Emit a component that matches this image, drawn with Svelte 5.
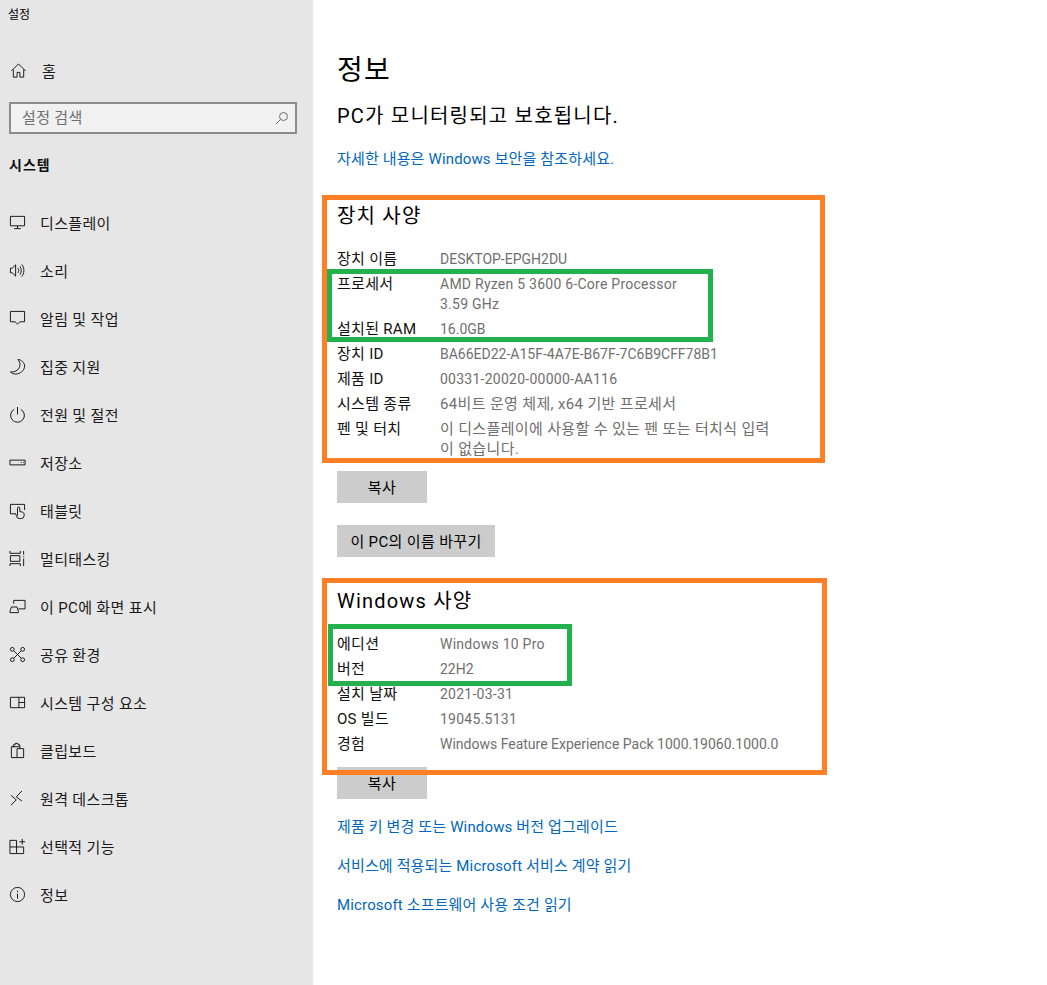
<script>
  const d = {
    display: 'M1.500 2.500h15v10h-15zM9 12.500v3M5.500 15.500h7',
    sound: 'M1.500 6.500h2l3.500-3.500v12l-3.500-3.500h-2zM9.500 6.500c1 1.500 1 3.500 0 5M11.500 4.500c2 2.500 2 6.500 0 9M13.500 2.500c3 3.500 3 9.500 0 13',
    notify: 'M1.500 1.500h15v11h-5l-2.500 2.500-2.500-2.500h-5z',
    moon: 'M9.500 1.500c2 2.500 2.800 5.500 1.500 8.500-1.500 3.200-5 5.200-9.500 4.800 1.500 1.500 3.500 2.200 5.500 2.200 4.500 0 9.500-3.500 9.500-8.500 0-3.500-3-6.500-7-7z',
    power: 'M9 1v8M5.500 3.500a7.300 7.300 0 1 0 7 0',
    storage: 'M1 6.500h16v5H1zM12.500 9h1M15 9h1',
    tablet: 'M7 12.500H1.500v-10h15v6M9 14.500V6.500a1.200 1.200 0 0 1 2.400 0V10l3 .8c1 .3 1.600 1 1.600 2v1.700a3 3 0 0 1-3 3h-2a3 3 0 0 1-3-3l-1.500-2.500',
    multi: 'M1 1v2.500h11V1M1 17v-2.500h11V17M1.500 6h10v6h-10zM15.500 1v4M15.500 9v8M15.500 6.500v1',
    project: 'M5 6V2.500h12v9h-7M1 15.500h9v-1l-1.500-5h-6l-1.500 5z',
    share: 'M4 4l10 10M14 4L4 14',
    comp: 'M1.500 3.500h15v11h-15zM10.500 3.500v11M10.500 9h6',
    clip: 'M6 5H2.500v11.500h6M8.500 16.500h7V7h-7zM4.500 5V3h2V1.500h3V3h2v2zM11.500 5v2',
    remote: 'M2 5.500l5.700 5L2 16M13.700 1L7.700 7.300l6 4.400',
    opt: 'M1 2.500h7v14H1zM1 9.500h14.500v7H8M11 4h6M14 1v6',
  };
  const nav = [
    ['디스플레이', 'display'], ['소리', 'sound'], ['알림 및 작업', 'notify'], ['집중 지원', 'moon'],
    ['전원 및 절전', 'power'], ['저장소', 'storage'], ['태블릿', 'tablet'], ['멀티태스킹', 'multi'],
    ['이 PC에 화면 표시', 'project'], ['공유 환경', 'share'], ['시스템 구성 요소', 'comp'],
    ['클립보드', 'clip'], ['원격 데스크톱', 'remote'], ['선택적 기능', 'opt'], ['정보', 'info'],
  ];
  const device = [
    { k: '장치 이름', v: 'DESKTOP-EPGH2DU', c: 'latin' },
    { k: '프로세서', v: 'AMD Ryzen 5 3600 6-Core Processor', v2: '3.59 GHz', c: 'latin wide' },
    { k: '설치된 RAM', v: '16.0GB', c: 'latin' },
    { k: '장치 ID', v: 'BA66ED22-A15F-4A7E-B67F-7C6B9CFF78B1', c: 'latin' },
    { k: '제품 ID', v: '00331-20020-00000-AA116', c: 'latin wide' },
    { k: '시스템 종류', v: '64비트 운영 체제, x64 기반 프로세서' },
    { k: '펜 및 터치', v: '이 디스플레이에 사용할 수 있는 펜 또는 터치식 입력', v2: '이 없습니다.' },
  ];
  const win = [
    { k: '에디션', v: 'Windows 10 Pro', c: 'latin wide' },
    { k: '버전', v: '22H2', c: 'latin' },
    { k: '설치 날짜', v: '2021-03-31', c: 'latin wide' },
    { k: 'OS 빌드', v: '19045.5131', c: 'latin wide' },
    { k: '경험', v: 'Windows Feature Experience Pack 1000.19060.1000.0', c: 'latin' },
  ];
</script>

{#snippet rows(list)}
  {#each list as r}
    <div class="row">
      <div class="k">{r.k}</div>
      <div class="v {r.c ?? ''}">{r.v}{#if r.v2}<br />{r.v2}{/if}</div>
    </div>
  {/each}
{/snippet}

<div class="app">
  <aside>
    <div class="wintitle">설정</div>
    <div class="item home">
      <svg viewBox="0 0 18 18"><path d="M1.500 9.500L9 2l7.500 7.500M3.500 8v8h4v-5h3v5h4V8" /></svg>
      <span>홈</span>
    </div>
    <div class="search">
      <span>설정 검색</span>
      <svg viewBox="0 0 14 14"><circle cx="8.500" cy="5.500" r="4" /><path d="M5.500 8.500L1 13" /></svg>
    </div>
    <div class="group">시스템</div>
    <nav>
      {#each nav as [label, icon]}
        <div class="item">
          <svg viewBox="0 0 18 18">
            {#if icon === 'info'}
              <circle cx="9" cy="9" r="7.500" /><path d="M9 8v5.500M9 5v1.500" />
            {:else if icon === 'share'}
              <path d={d.share} /><circle cx="3.500" cy="3.500" r="2" class="f" /><circle cx="14.500" cy="3.500" r="2" class="f" /><circle cx="3.500" cy="14.500" r="2" class="f" /><circle cx="14.500" cy="14.500" r="2" class="f" />
            {:else}
              <path d={d[icon]} />
            {/if}
          </svg>
          <span>{label}</span>
        </div>
      {/each}
    </nav>
  </aside>

  <main>
    <h1>정보</h1>
    <h2 class="status">PC가 모니터링되고 보호됩니다.</h2>
    <a class="link sec" href="#a">자세한 내용은 Windows 보안을 참조하세요.</a>

    <h2 class="spec">장치 사양</h2>
    <div class="rows">{@render rows(device)}</div>
    <button class="copy1">복사</button>
    <button class="rename">이 PC의 이름 바꾸기</button>

    <h2 class="spec win">Windows 사양</h2>
    <div class="rows">{@render rows(win)}</div>
    <button class="copy2">복사</button>

    <div class="links">
      <a class="link" href="#a">제품 키 변경 또는 Windows 버전 업그레이드</a>
      <a class="link" href="#a">서비스에 적용되는 Microsoft 서비스 계약 읽기</a>
      <a class="link" href="#a">Microsoft 소프트웨어 사용 조건 읽기</a>
    </div>
  </main>

  <div class="mark orange o1"></div>
  <div class="mark green g1"></div>
  <div class="mark orange o2"></div>
  <div class="mark green g2"></div>
</div>

<style>
  :global(body) { margin: 0; background: #fff; }
  .app {
    position: relative;
    display: flex;
    width: 1047px;
    height: 985px;
    overflow: hidden;
    font-family: Roboto, "Noto Sans CJK KR", sans-serif;
    font-size: 15px;
    color: #000;
  }
  aside {
    width: 313px;
    flex: none;
    background: #e6e6e6;
    display: flex;
    flex-direction: column;
  }
  .wintitle { font-size: 12px; line-height: 16px; padding: 7px 0 0 8px; height: 39px; }
  .item {
    display: flex;
    align-items: center;
    height: 48px;
    padding-left: 9px;
    color: #1a1a1a;
    letter-spacing: 0.35px;
  }
  .item svg {
    width: 17px;
    height: 17px;
    flex: none;
    margin-right: 14px;
    fill: none;
    stroke: #111;
    stroke-width: 1;
  }
  .item svg .f { fill: #e6e6e6; }
  .home { padding-left: 10px; }
  .home svg { margin-right: 15px; }
  .search {
    margin: 8px 16px 0 9px;
    height: 32px;
    box-sizing: border-box;
    border: 2px solid #8c8c8c;
    background: #f1f1f1;
    display: flex;
    align-items: center;
    justify-content: space-between;
    padding: 0 6px 0 11px;
    color: #6f6f6f;
    letter-spacing: 0.35px;
    line-height: 26px;
  }
  .search svg { width: 14px; height: 14px; fill: none; stroke: #6f6f6f; stroke-width: 1; }
  .group { font-weight: 700; font-size: 14px; line-height: 20px; margin: 21px 0 23px 9px; letter-spacing: 1px; color: #111; }

  main { flex: 1; padding-left: 24px; display: flex; flex-direction: column; align-items: flex-start; }
  h1 { margin: 51px 0 0; font-size: 28px; font-weight: 400; line-height: 40px; letter-spacing: 1.2px; height: 40px; }
  h2 { margin: 0; font-size: 20px; font-weight: 400; line-height: 28px; letter-spacing: 1.2px; }
  .status { margin-top: 11px; }
  .link { color: #0067c0; text-decoration: none; line-height: 20px; letter-spacing: 0.15px; }
  .sec { margin-top: 19px; }
  .spec { margin-top: 33px; }
  .spec.win { margin-top: 30px; }
  .rows { margin-top: 19px; display: flex; flex-direction: column; }
  .row { display: flex; padding-bottom: 5px; line-height: 20px; }
  .k { width: 103px; flex: none; letter-spacing: 0.3px; color: #111; }
  .v { color: #6f6f6f; letter-spacing: 0.35px; white-space: nowrap; }
  .v.latin { font-size: 14px; letter-spacing: 0; }
  .v.latin.wide { letter-spacing: 0.25px; }
  button {
    font: inherit;
    height: 32px;
    border: 0;
    background: #cccccc;
    color: #000;
    padding: 0 0 1px;
    letter-spacing: 0.35px;
  }
  .copy1 { width: 90px; margin-top: 7px; }
  .rename { width: 158px; margin-top: 22px; }
  .copy2 { width: 90px; margin-top: 8px; }
  .links { display: flex; flex-direction: column; gap: 19px; margin-top: 18px; }

  .mark { position: absolute; box-sizing: border-box; border-style: solid; }
  .orange { border-color: #ff7f27; border-width: 5px; }
  .green { border-color: #22b14c; border-width: 5px; }
  .o1 { left: 322px; top: 195px; width: 503px; height: 268px; }
  .g1 { left: 327px; top: 269px; width: 386px; height: 73px; }
  .o2 { left: 322px; top: 578px; width: 505px; height: 197px; }
  .g2 { left: 328px; top: 624px; width: 244px; height: 62px; }
</style>
